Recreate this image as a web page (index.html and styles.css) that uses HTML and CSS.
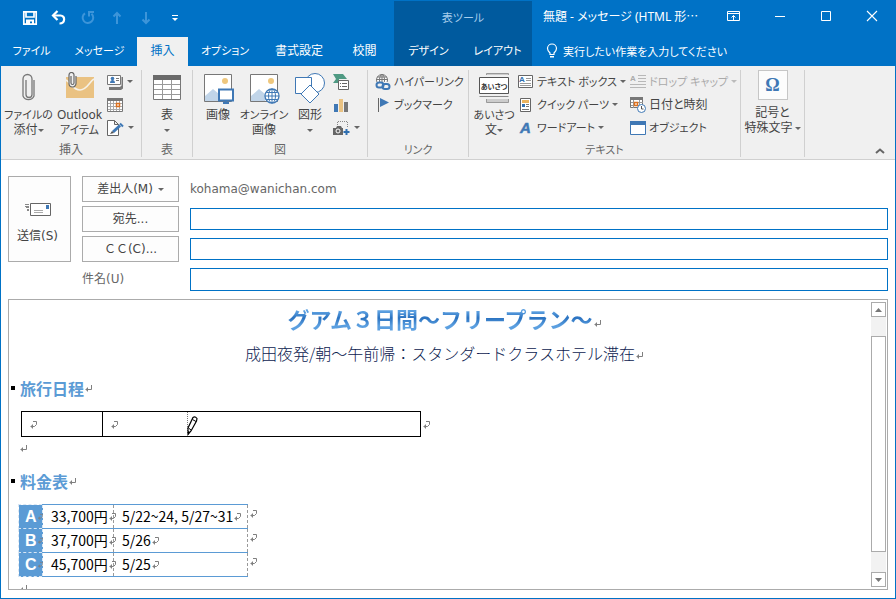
FILE: index.html
```html
<!DOCTYPE html>
<html lang="ja">
<head>
<meta charset="UTF-8">
<meta name="viewport" content="width=device-width, initial-scale=1.0">
<title>無題 - メッセージ (HTML 形式)</title>
<link rel="stylesheet" href="styles.css">
</head>
<body>

<!-- shared marks -->
<svg class="defs" width="0" height="0" aria-hidden="true">
    <symbol id="ret" viewBox="0 0 8 8"><path d="M7.500 1V5.500H1.500M3.500 3.500V7.500M2.500 4.500V6.500" fill="none" stroke="#7f7f7f"/></symbol>
    <symbol id="cell" viewBox="0 0 8 8"><path d="M4 .5H7.500V3.500L5.500 5.500H1.500M3.500 3.500V7.500M2.500 4.500V6.500" fill="none" stroke="#7f7f7f"/></symbol>
</svg>

<header>
    <div class="head-main">
        <div class="quick">
            <button aria-label="上書き保存"><svg width="16" height="16"><path d="M1.800 1.800h12.400v12.400H1.800zM4 2v5h8V2" fill="none" stroke="#fff" stroke-width="1.700"/><path d="M4 9.500h8V14h-2v-2.500H8V14H4z" fill="#fff"/></svg></button>
            <button aria-label="元に戻す"><svg width="16" height="16"><path d="M2 5.500h7.500c5 0 5 8-1 8" fill="none" stroke="#fff" stroke-width="2.200"/><path d="M6.500 1L2 5.500L6.500 10" fill="none" stroke="#fff" stroke-width="2.200"/></svg></button>
            <button aria-label="やり直し" disabled><svg width="16" height="16"><path d="M5 3.300A5.300 5.300 0 1 0 11.500 3.800" fill="none" stroke="#3d95d9" stroke-width="2"/><path d="M9 6.500V2H14" fill="none" stroke="#3d95d9" stroke-width="2"/></svg></button>
            <button aria-label="前のアイテム" disabled><svg width="16" height="16"><path d="M8 14V3M4.500 6.500L8 3l3.500 3.500" fill="none" stroke="#3d95d9" stroke-width="2"/></svg></button>
            <button aria-label="次のアイテム" disabled><svg width="16" height="16"><path d="M8 2v11M4.500 9.500L8 13l3.500-3.500" fill="none" stroke="#3d95d9" stroke-width="2"/></svg></button>
            <button aria-label="クイック アクセス ツール バーのカスタマイズ"><svg width="16" height="16"><path d="M5 5.500h6" stroke="#fff"/><path d="M5 8h6l-3 3z" fill="#fff"/></svg></button>
        </div>
        <nav class="tabs">
            <a href="#">ファイル</a>
            <a href="#">メッセージ</a>
            <a href="#" class="active kanji">挿入</a>
            <a href="#">オプション</a>
            <a href="#" class="kanji">書式設定</a>
            <a href="#" class="kanji">校閲</a>
        </nav>
    </div>
    <div class="head-context">
        <div class="context-title">表ツール</div>
        <nav class="context-tabs">
            <a href="#">デザイン</a>
            <a href="#">レイアウト</a>
        </nav>
    </div>
    <div class="head-right">
        <div class="titlebar">
            <span class="title">無題 - メッセージ (HTML 形⋯</span>
            <button aria-label="リボンの表示オプション"><svg width="14" height="12"><path d="M.5 1.500h12v9H.5zM.5 3.500h12M6.500 10V5.500M4.500 7.500l2-2l2 2" fill="none" stroke="#fff"/></svg></button>
            <button aria-label="最小化"><svg width="12" height="12"><path d="M1 6.500h10" stroke="#fff"/></svg></button>
            <button aria-label="最大化"><svg width="12" height="12"><path d="M1.500 1.500h9v9h-9z" fill="none" stroke="#fff"/></svg></button>
            <button aria-label="閉じる"><svg width="12" height="12"><path d="M1 1l10 10M11 1L1 11" stroke="#fff" stroke-width="1.100"/></svg></button>
        </div>
        <a href="#" class="tellme"><svg width="12" height="16"><path d="M4 11.500V10C2.500 8.500 1.500 7.500 1.500 5.500a4.500 4.500 0 0 1 9 0C10.500 7.500 9.500 8.500 8 10v1.500z" fill="none" stroke="#fff" stroke-width="1.200"/><path d="M4 13h4v1.500H4z" fill="#fff"/></svg>実行したい作業を入力してください</a>
    </div>
</header>

<div class="ribbon">
    <section class="group">
        <div class="group-body">
            <button class="big wide">
                <svg width="32" height="32"><path d="M13 8v14.500a3 3 0 0 0 6 0V7a4.500 4.500 0 0 0-9 0V24a6 6 0 0 0 11 0V8" fill="none" stroke="#777" stroke-width="1.300"/></svg>
                <span><span class="kana">ファイルの</span><br>添付<i class="arrow"></i></span>
            </button>
            <button class="big wide">
                <svg width="32" height="32"><path d="M2 5h28v21H2z" fill="#eac282"/><path d="M2 8c5 3 7 10 14 10S26 9 30 7" fill="none" stroke="#f6f1e6" stroke-width="1.600"/><path d="M7 4v7a1.500 1.500 0 0 0 3 0V3a2.500 2.500 0 0 0-5 0v8.500a3.500 3.500 0 0 0 7 0V4" fill="#f0f0f0" stroke="#666" stroke-width="1.200"/></svg>
                <span>Outlook<br><span class="kana">アイテム</span></span>
            </button>
            <div class="small-col">
                <button aria-label="名刺"><svg width="16" height="16"><path d="M2 14.500h11.500l2.500-2V3" fill="none" stroke="#777" stroke-width="3"/><path d="M.5 1.500h13v9H.5z" fill="#fff" stroke="#777"/><path d="M3 9c0-4 5-4 5 0z" fill="#3f78b5"/><circle cx="5.500" cy="4.500" r="1.800" fill="#3f78b5"/><path d="M9 4.500h3M9 6.500h3" stroke="#777"/></svg><i class="arrow"></i></button>
                <button aria-label="予定表"><svg width="16" height="16"><path d="M.5 1.500h15v13H.5z" fill="#fff" stroke="#777"/><path d="M0 1h16v3H0z" fill="#777"/><path d="M3.500 4v10M6.500 4v10M9.500 4v10M12.500 4v10M1 6.500h14M1 9.500h14M1 12.500h14" stroke="#aaa"/><path d="M9.500 6.500h3v3h-3z" fill="#fff" stroke="#dd7220" stroke-width="1.500"/></svg></button>
                <button aria-label="署名"><svg width="17" height="16"><path d="M.5.5h7l4 4v11H.5zM7.500.5v4h4" fill="#fff" stroke="#666"/><path d="M6 12L13 5.500" stroke="#3f78b5" stroke-width="3"/><path d="M13 3.500l3 3" stroke="#3f78b5" stroke-width="2"/><path d="M3 14l2-3l2 2z" fill="#555"/></svg><i class="arrow"></i></button>
            </div>
        </div>
        <h2>挿入</h2>
    </section>
    <section class="group">
        <div class="group-body">
            <button class="big">
                <svg width="30" height="32"><path d="M1.500 3.500h27v24h-27z" fill="#fff" stroke="#777"/><path d="M1 3h28v5H1z" fill="#6a6a6a"/><path d="M10.500 8v19M19.500 8v19M2 12.500h26M2 17.500h26M2 22.500h26" stroke="#999"/></svg>
                <span>表<br><i class="arrow"></i></span>
            </button>
        </div>
        <h2>表</h2>
    </section>
    <section class="group">
        <div class="group-body">
            <button class="big">
                <svg width="32" height="32"><path d="M2.500 2.500h27v27h-27z" fill="#fff" stroke="#777"/><path d="M3 29V24l8-7l6 5v7z" fill="#c1d5e9"/><circle cx="23" cy="9" r="3" fill="#eec77e"/><path d="M17 17.500h14v11H17z" fill="#fff" stroke="#3f78b5" stroke-width="2"/><path d="M24 28v3M21 31h6" stroke="#3f78b5" stroke-width="2"/></svg>
                <span>画像</span>
            </button>
            <button class="big">
                <svg width="32" height="32"><path d="M2.500 2.500h27v27h-27z" fill="#fff" stroke="#777"/><path d="M3 29V24l8-7l6 5v7z" fill="#c1d5e9"/><circle cx="23" cy="9" r="3" fill="#eec77e"/><circle cx="24" cy="24" r="7" fill="#fff" stroke="#3f78b5" stroke-width="1.300"/><path d="M24 17v14M17 24h14M18.500 20.500h11M18.500 27.500h11" stroke="#3f78b5"/><ellipse cx="24" cy="24" rx="3.500" ry="7" fill="none" stroke="#3f78b5"/></svg>
                <span><span class="kana">オンライン</span><br>画像</span>
            </button>
            <button class="big">
                <svg width="32" height="32"><circle cx="21" cy="11" r="9.500" fill="#fff" stroke="#3f78b5"/><path d="M1.500 5.500h16v16h-16z" fill="#fff" stroke="#3f78b5"/><path d="M16 13l9 9l-9 9l-9-9z" fill="#fff" stroke="#3f78b5"/></svg>
                <span>図形<br><i class="arrow"></i></span>
            </button>
            <div class="small-col">
                <button aria-label="SmartArt"><svg width="16" height="16"><path d="M0 0h10l4 5H6v4H0l3-4z" fill="#4f9a83"/><path d="M5.500 6.500h10v9h-10z" fill="#fff" stroke="#666"/><path d="M7 9.500h1M9 9.500h5M7 12.500h1M9 12.500h5" stroke="#666"/></svg></button>
                <button aria-label="グラフ"><svg width="16" height="16"><path d="M1 7h4v8H1z" fill="#3f78b5"/><path d="M6 2h4v13H6z" fill="#eac282"/><path d="M11 5h4v10h-4z" fill="#777"/></svg></button>
                <button aria-label="スクリーンショット"><svg width="17" height="16"><path d="M4.500 7V1.500h10V8" fill="none" stroke="#888" stroke-dasharray="1 1"/><path d="M0 8h3l1-2h4l1 2h1v7H0z" fill="#666"/><circle cx="5" cy="11" r="2" fill="#666" stroke="#fff"/><path d="M13.500 9v6M10.500 12h6" stroke="#2f6fb0" stroke-width="2"/></svg><i class="arrow"></i></button>
            </div>
        </div>
        <h2>図</h2>
    </section>
    <section class="group">
        <div class="group-body">
            <div class="list links">
                <button><svg width="16" height="16"><circle cx="7" cy="6" r="5.500" fill="#fff" stroke="#777"/><path d="M7 0v8M1 5.500h12M2 3h10" stroke="#777"/><ellipse cx="7" cy="6" rx="2.500" ry="5.500" fill="none" stroke="#777"/><path d="M0 8h16v8H0z" fill="#f0f0f0"/><rect x="1.500" y="8.500" width="7" height="5" rx="2.500" fill="none" stroke="#3f78b5" stroke-width="2"/><rect x="7.500" y="10" width="7" height="5" rx="2.500" fill="none" stroke="#3f78b5" stroke-width="2"/></svg>ハイパーリンク</button>
                <button><svg width="16" height="16"><path d="M3.500 1v14" stroke="#666"/><path d="M5 1l9 4.500L5 10z" fill="#3f78b5"/></svg>ブックマーク</button>
            </div>
        </div>
        <h2 class="kana">リンク</h2>
    </section>
    <section class="group">
        <div class="group-body">
            <button class="big">
                <svg width="32" height="32"><path d="M8.500 1.500h22v29h-22z" fill="#ccc" stroke="#999"/><path d="M0 3h32v24H0z" fill="#f0f0f0"/><path d="M1.500 24.500h29" stroke="#888"/><path d="M1.500 5.500h29v16h-29z" fill="#fff" stroke="#555"/><text x="16" y="17" text-anchor="middle" font-size="7" font-weight="700" fill="#333">あいさつ</text></svg>
                <span><span class="kana">あいさつ</span><br>文<i class="arrow"></i></span>
            </button>
            <div class="list parts">
                <button><svg width="16" height="16"><path d="M.5 1.500h14v12H.5z" fill="#fff" stroke="#666"/><text x="1" y="8" font-size="8" font-weight="700" fill="#2f6fb0" font-family="Liberation Sans">A</text><path d="M8 4.500h5M8 6.500h5M2 9.500h11M2 11.500h11" stroke="#999"/></svg>テキスト ボックス<i class="arrow"></i></button>
                <button><svg width="16" height="16"><path d="M2.500 1.500h10v13h-10z" fill="#fff" stroke="#666"/><path d="M4 3h7v3H4z" fill="#eab35e"/><path d="M4 7h3v3H4z" fill="#2f6fb0"/><path d="M8 7.500h3M8 9.500h3M4 12.500h7" stroke="#777"/></svg>クイック パーツ<i class="arrow"></i></button>
                <button><svg width="16" height="16"><text x="2" y="13" font-size="15" font-weight="700" font-style="italic" fill="#3f78b5" stroke="#3f78b5" stroke-width=".5" font-family="Liberation Sans">A</text></svg>ワードアート<i class="arrow"></i></button>
            </div>
            <div class="list">
                <button disabled><svg width="16" height="16"><text x="0" y="7" font-size="8" font-weight="700" fill="#aaa" font-family="Liberation Sans">A</text><path d="M8 1.500h8M8 4.500h8M8 7.500h8M0 10.500h16M0 13.500h16" stroke="#b8b8b8"/></svg>ドロップ キャップ<i class="arrow"></i></button>
                <button class="kanji"><svg width="16" height="16"><path d="M.5.5h12v10H.5z" fill="#fff" stroke="#777"/><path d="M3.500 3v8M9.500 3v8M1 5.500h12M1 8.500h12" stroke="#999"/><path d="M0 0h13v3H0z" fill="#777"/><path d="M4.500 5.500h3v3h-3z" fill="#fff" stroke="#dd7220" stroke-width="1.500"/><circle cx="11.500" cy="11.500" r="4" fill="#fff" stroke="#3f78b5"/><path d="M11.500 9v3h2" fill="none" stroke="#555"/></svg>日付と時刻</button>
                <button><svg width="16" height="16"><path d="M.5 1.500h15v13H.5z" fill="#fff" stroke="#3f78b5"/><path d="M0 1h16v4H0z" fill="#3f78b5"/></svg>オブジェクト</button>
            </div>
        </div>
        <h2 class="kana">テキスト</h2>
    </section>
    <section class="group">
        <div class="group-body">
            <button class="big symbol">
                <b>Ω</b>
                <span>記号と<br>特殊文字<i class="arrow"></i></span>
            </button>
        </div>
    </section>
    <button class="collapse" aria-label="リボンを折りたたむ"><svg width="10" height="6"><path d="M1 5l4-3.500L9 5" fill="none" stroke="#666" stroke-width="2"/></svg></button>
</div>

<main>
    <form class="compose">
        <button type="button" class="send">
            <svg width="28" height="16"><path d="M1 2.500h4M2 5.500h3M1 4.500h4M3 8.500h2M3 7.500h2" stroke="#888"/><path d="M6.500 1.500h20v12h-20z" fill="#fff" stroke="#666"/><path d="M22 3h3v4h-3z" fill="#3f78b5"/><path d="M10 8.500h9M10 10.500h9" stroke="#aaa"/></svg>
            送信(S)
        </button>
        <button type="button" class="field">差出人(M)<i class="arrow"></i></button>
        <span class="from">kohama@wanichan.com</span>
        <button type="button" class="field">宛先...</button>
        <input type="text" aria-label="宛先">
        <button type="button" class="field">ＣＣ(C)...</button>
        <input type="text" aria-label="ＣＣ">
        <label for="subject">件名(U)</label>
        <input type="text" id="subject">
    </form>

    <div class="editor">
        <article>
            <p class="trip-title"><span>グアム３日間～フリープラン～</span><svg class="mark"><use href="#ret"/></svg></p>
            <p class="trip-sub">成田夜発/朝～午前帰：スタンダードクラスホテル滞在<svg class="mark"><use href="#ret"/></svg></p>

            <h3>旅行日程<svg class="mark"><use href="#ret"/></svg></h3>
            <table class="schedule">
                <tr>
                    <td><svg class="mark"><use href="#cell"/></svg></td>
                    <td class="drawing"><svg class="mark"><use href="#cell"/></svg>
                        <svg class="pencil" width="14" height="26"><path d="M.5 0v22" stroke="#777" stroke-dasharray="1 1"/><path d="M1 22.500V16L6 5.500Q8 4 10 6.500L9.500 9L4 19z" fill="#fff" stroke="#000" stroke-width="1.200"/><path d="M5.500 7.500l3.500 2M1.500 16l2.500 2" stroke="#000" fill="none"/><path d="M1 19v4l2-3z" fill="#000"/></svg>
                    </td>
                    <td class="out"><svg class="mark"><use href="#cell"/></svg></td>
                </tr>
            </table>
            <p class="empty"><svg class="mark"><use href="#ret"/></svg></p>

            <h3>料金表<svg class="mark"><use href="#ret"/></svg></h3>
            <table class="prices">
                <tr><th>A<svg class="mark"><use href="#cell"/></svg></th><td>33,700円<svg class="mark"><use href="#cell"/></svg></td><td class="dates">5/22~24, 5/27~31<svg class="mark"><use href="#cell"/></svg></td><td class="out"><svg class="mark"><use href="#cell"/></svg></td></tr>
                <tr><th>B<svg class="mark"><use href="#cell"/></svg></th><td>37,700円<svg class="mark"><use href="#cell"/></svg></td><td class="dates">5/26<svg class="mark"><use href="#cell"/></svg></td><td class="out"><svg class="mark"><use href="#cell"/></svg></td></tr>
                <tr><th>C<svg class="mark"><use href="#cell"/></svg></th><td>45,700円<svg class="mark"><use href="#cell"/></svg></td><td class="dates">5/25<svg class="mark"><use href="#cell"/></svg></td><td class="out"><svg class="mark"><use href="#cell"/></svg></td></tr>
            </table>
            <p class="empty"><svg class="mark"><use href="#ret"/></svg></p>
        </article>
        <div class="scrollbar">
            <button aria-label="上へ"><svg width="7" height="4"><path d="M0 4L3.500 0L7 4z" fill="#777"/></svg></button>
            <div class="track"><div class="thumb"></div></div>
            <button aria-label="下へ"><svg width="7" height="4"><path d="M0 0h7L3.500 4z" fill="#777"/></svg></button>
        </div>
    </div>
</main>

</body>
</html>
```

FILE: styles.css
```css
* {
    box-sizing: border-box;
}
body {
    margin: 0;
    height: 100vh;
    display: flex;
    flex-direction: column;
    border: 1px solid #0072c6;
    background-color: #fff;
    color: #444;
    font-family: "Noto Sans", "Noto Sans CJK JP", sans-serif;
    font-size: 12px;
    line-height: 15px;
    font-feature-settings: "palt";
    overflow: hidden;
}
.defs {
    position: absolute;
}
button {
    padding: 0;
    border: none;
    background: none;
    color: inherit;
    font: inherit;
    font-feature-settings: inherit;
    white-space: nowrap;
}
svg {
    flex: none;
}
a {
    color: #fff;
    text-decoration: none;
}

/* title bar and tabs */
header {
    display: grid;
    grid-template-columns: 393px 138px 1fr;
    background-color: #0072c6;
    color: #fff;
}
.quick {
    display: flex;
    height: 36px;
    padding: 0 0 3px 14px;
}
.quick button {
    width: 29px;
    display: flex;
    align-items: center;
    justify-content: center;
}
.tabs {
    display: grid;
    grid-template-columns: 61px 75px 51px 74px 74px 57px;
}
.tabs a,
.context-tabs a {
    height: 29px;
    font-size: 11px;
    line-height: 28px;
    text-align: center;
    white-space: nowrap;
}
.tabs .kanji {
    font-size: 12px;
}
.tabs .active {
    background-color: #f0f0f0;
    color: #0072c6;
}
.head-context {
    background-color: #005a9e;
}
.context-title {
    height: 36px;
    font-size: 11px;
    line-height: 34px;
    text-align: center;
    color: #a6cdec;
}
.context-tabs {
    display: grid;
    grid-template-columns: 1fr 1fr;
}
.titlebar {
    display: flex;
    height: 36px;
    padding-left: 11px;
    line-height: 32px;
}
.title {
    flex: 1;
    white-space: nowrap;
}
.titlebar button {
    width: 46px;
    height: 30px;
    display: flex;
    align-items: center;
    justify-content: center;
}
.tellme {
    display: flex;
    align-items: center;
    gap: 5px;
    height: 28px;
    padding-left: 14px;
    font-size: 11px;
    white-space: nowrap;
}

/* ribbon */
.ribbon {
    display: grid;
    grid-template-columns: 141px 51px 175px 101px 272px 64px 1fr;
    padding: 4px 0 2px;
    background-color: #f0f0f0;
    border-bottom: 1px solid #d0d0d0;
}
.group {
    border-right: 1px solid #d0d0d0;
}
.group-body {
    display: flex;
    height: 73px;
    padding: 0 2px;
}
.group h2 {
    margin: 0;
    font-size: 12px;
    font-weight: normal;
    line-height: 14px;
    text-align: center;
    color: #666;
}
.kana,
.group .kana {
    font-size: 11px;
}
.big {
    width: 46px;
    display: flex;
    flex-direction: column;
    align-items: center;
    gap: 3px;
    padding-top: 2px;
}
.wide {
    width: 51px;
}
.wide + .small-col {
    padding-left: 2px;
}
.arrow {
    display: inline-block;
    margin-left: 4px;
    border: 3px solid transparent;
    border-top-color: #666;
    border-bottom: none;
    vertical-align: middle;
}
br + .arrow {
    margin-left: 0;
}
.small-col button,
.list button {
    display: flex;
    align-items: center;
    height: 23px;
}
.list {
    padding-left: 1px;
}
.list button {
    gap: 3px;
    font-size: 11px;
}
.list .kanji {
    font-size: 12px;
}
.list .arrow {
    margin-left: 0;
}
.links {
    padding-left: 5px;
}
.parts {
    flex: none;
    width: 112px;
}
button:disabled {
    color: #aaa;
}
button:disabled .arrow {
    border-top-color: #bbb;
}
.symbol {
    width: 60px;
    padding-top: 0;
    gap: 5px;
}
.symbol .arrow {
    margin-left: 2px;
}
.symbol b {
    width: 30px;
    height: 30px;
    border: 1px solid #c6c6c6;
    background-color: #fcfcfc;
    color: #3f78b5;
    font-family: "Liberation Serif", serif;
    font-size: 18px;
    line-height: 28px;
}
.collapse {
    align-self: end;
    justify-self: end;
    margin-right: 10px;
}

/* message header */
main {
    flex: 1;
    min-height: 0;
    display: flex;
    flex-direction: column;
    padding: 16px 7px 8px;
}
.compose {
    display: grid;
    grid-template-columns: 63px 97px 1fr;
    grid-auto-rows: 26px;
    gap: 4px 11px;
    align-items: center;
    font-family: "DejaVu Sans", "Noto Sans CJK JP", sans-serif;
    font-feature-settings: normal;
}
.compose button {
    height: 100%;
    border: 1px solid #ababab;
    background-color: #fdfdfd;
}
.compose .send {
    grid-row: 1 / 4;
    display: flex;
    flex-direction: column;
    align-items: center;
    justify-content: center;
    gap: 11px;
    padding: 8px 4px 0 0;
}
.compose .arrow {
    margin-left: 5px;
}
.compose label {
    grid-column: 2;
    color: #666;
}
.from {
    color: #666;
}
.compose input {
    width: 100%;
    height: 22px;
    border: 1px solid #0072c6;
    background-color: #fff;
    font: inherit;
}
.compose #subject {
    height: 23px;
}

/* message body */
.editor {
    flex: 1;
    min-height: 0;
    display: flex;
    margin-top: 7px;
    border: 1px solid #ababab;
    color: #000;
    font-family: "Noto Sans CJK JP", sans-serif;
    font-feature-settings: normal;
}
article {
    flex: 1;
    padding: 2px 0 0 9px;
    overflow: hidden;
}
article p,
article h3 {
    margin: 0;
}
.mark {
    width: 8px;
    height: 8px;
    vertical-align: 1px;
}
.trip-title {
    text-align: center;
    font-size: 22px;
    font-weight: bold;
    line-height: 32px;
}
.trip-title span {
    background: linear-gradient(#5b9fe0 30%, #2a72c0 50%, #5b9fe0 74%);
    -webkit-background-clip: text;
    background-clip: text;
    color: transparent;
}
article .trip-sub {
    margin: 3px 0 0;
    text-align: center;
    font-size: 16px;
    font-weight: 300;
    line-height: 32px;
    color: #0c2250;
}
article h3 {
    display: flex;
    align-items: center;
    margin: 7px 0 11px -7px;
    font-size: 16px;
    line-height: 24px;
    color: #5b9bd5;
}
h3::before {
    content: "";
    width: 4px;
    height: 4px;
    margin-right: 5px;
    background-color: #000;
}
.empty {
    padding-left: 1px;
    line-height: 22px;
    height: 25px;
}
table {
    border-collapse: collapse;
}
td,
th {
    padding: 0;
}
.schedule {
    margin-left: 3px;
}
.schedule td {
    width: 81px;
    height: 25px;
    padding-left: 7px;
    border: 1px solid #000;
    line-height: 15px;
}
.schedule .drawing {
    position: relative;
    width: 318px;
}
.pencil {
    position: absolute;
    left: 84px;
    top: 0;
}
.prices {
    table-layout: fixed;
    width: 241px;
    font-size: 14px;
    line-height: 22px;
}
.prices tr {
    height: 24px;
}
.prices th {
    width: 24px;
    padding-left: 6px;
    border: 1px dashed #d8e6f4;
    background-color: #5b9bd5;
    color: #fff;
    font-family: "Liberation Sans", sans-serif;
    font-size: 16px;
    text-align: left;
    white-space: nowrap;
}
.prices td {
    width: 71px;
    padding-left: 8px;
    border-width: 1px;
    border-style: solid dashed;
    border-color: #5b9bd5 #999;
    white-space: nowrap;
    vertical-align: top;
}
.prices th .mark {
    width: 6px;
}
.prices .dates {
    width: 134px;
}
.schedule .out,
.prices .out {
    width: 12px;
    padding-left: 1px;
    border: none;
}
.prices .out {
    line-height: 16px;
}
.scrollbar {
    width: 17px;
    display: flex;
    flex-direction: column;
    padding: 2px 1px 2px 1px;
}
.scrollbar button {
    height: 15px;
    border: 1px solid #ababab;
    background-color: #fff;
    display: flex;
    align-items: center;
    justify-content: center;
}
.track {
    flex: 1;
    padding: 19px 0 20px;
    display: flex;
    background-color: #f2f2f2;
}
.thumb {
    flex: 1;
    border: 1px solid #ababab;
    background-color: #fff;
}
```
